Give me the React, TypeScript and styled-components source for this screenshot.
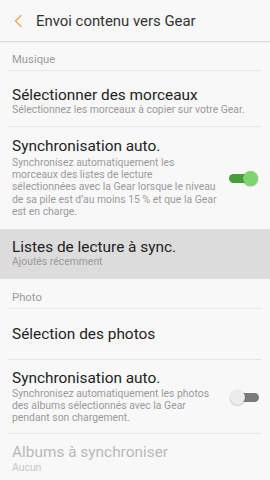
import React from "react";
import styled, { createGlobalStyle } from "styled-components";

const Global = createGlobalStyle`
  html, body { margin: 0; padding: 0; background: #f8f8f8; }
  body { font-family: Roboto, "Noto Sans", "Liberation Sans", sans-serif; -webkit-font-smoothing: antialiased; }
  * { box-sizing: border-box; }
`;

const Screen = styled.div`
  width: 270px;
  height: 480px;
  overflow: hidden;
  background: #f8f8f8;
  display: flex;
  flex-direction: column;
`;

const Header = styled.header`
  height: 42px;
  flex: none;
  display: flex;
  align-items: center;
  border-bottom: 1px solid #dcdcdc;
  box-shadow: 0 1px 1px rgba(0, 0, 0, 0.04);
`;

const BackButton = styled.div`
  width: 36px;
  height: 42px;
  display: flex;
  align-items: center;
  justify-content: flex-start;
  padding-left: 13px;
  padding-top: 1px;
`;

const Title = styled.h1`
  margin: 0;
  font-size: 14.9px;
  font-weight: 400;
  color: #333333;
`;

const SectionLabel = styled.div<{ $pt: number }>`
  flex: none;
  margin: 0 8px;
  padding: ${(p) => p.$pt}px 4px 4px;
  font-size: 11.3px;
  line-height: 12px;
  color: #9b9b9b;
  border-bottom: 1px solid #e7e7e7;
`;

const Row = styled.div<{ $pt: number; $pb: number; $pressed?: boolean; $divider?: boolean }>`
  flex: none;
  display: flex;
  align-items: center;
  padding: ${(p) => p.$pt}px 12px ${(p) => p.$pb}px;
  background: ${(p) => (p.$pressed ? "#dcdcdc" : "transparent")};
  position: relative;
  ${(p) =>
    p.$divider
      ? `&::after { content: ""; position: absolute; left: 8px; right: 8px; bottom: 0; height: 1px; background: #e7e7e7; }`
      : ""}
`;

const TextCol = styled.div<{ $narrow?: boolean }>`
  flex: 1;
  min-width: 0;
  ${(p) => (p.$narrow ? "max-width: 205px;" : "")}
`;

const ItemTitle = styled.div<{ $disabled?: boolean }>`
  font-size: 15.4px;
  line-height: 17px;
  color: ${(p) => (p.$disabled ? "#b9b9b9" : "#222222")};
`;

const ItemSub = styled.div<{ $disabled?: boolean; $gap?: number }>`
  font-size: 10.4px;
  line-height: 12.2px;
  margin-top: ${(p) => p.$gap ?? 0}px;
  color: ${(p) => (p.$disabled ? "#c6c6c6" : "#9a9a9a")};
`;

const SwitchWrap = styled.div<{ $on: boolean }>`
  width: 29px;
  height: 16px;
  position: relative;
  flex: none;
  margin-left: auto;
  margin-right: ${(p) => (p.$on ? 0 : -1)}px;
`;

const Track = styled.div<{ $on: boolean }>`
  position: absolute;
  top: 3.5px;
  height: 9px;
  border-radius: 5px;
  left: ${(p) => (p.$on ? 0 : 7)}px;
  right: ${(p) => (p.$on ? 7 : 0)}px;
  background: ${(p) => (p.$on ? "#4a9d3c" : "#7a7a7a")};
`;

const Knob = styled.div<{ $on: boolean }>`
  position: absolute;
  top: 0.5px;
  width: 15px;
  height: 15px;
  border-radius: 50%;
  left: ${(p) => (p.$on ? 14 : 0)}px;
  background: ${(p) => (p.$on ? "#7fd46c" : "#ececec")};
  box-shadow: 0 0.5px 1.5px rgba(0, 0, 0, 0.3);
`;

const Switch = ({ on }: { on: boolean }) => (
  <SwitchWrap $on={on}>
    <Track $on={on} />
    <Knob $on={on} />
  </SwitchWrap>
);

export default function App() {
  return (
    <Screen>
      <Global />
      <Header>
        <BackButton>
          <svg width="10" height="14" viewBox="0 0 10 14">
            <path d="M8 1.5 L2.5 7 L8 12.5" fill="none" stroke="#f0a154" strokeWidth="1.3" strokeLinecap="round" strokeLinejoin="round" />
          </svg>
        </BackButton>
        <Title>Envoi contenu vers Gear</Title>
      </Header>

      <SectionLabel $pt={12}>Musique</SectionLabel>

      <Row $pt={16} $pb={11} $divider>
        <TextCol>
          <ItemTitle>Sélectionner des morceaux</ItemTitle>
          <ItemSub>Sélectionnez les morceaux à copier sur votre Gear.</ItemSub>
        </TextCol>
      </Row>

      <Row $pt={11.2} $pb={10.8}>
        <TextCol $narrow>
          <ItemTitle>Synchronisation auto.</ItemTitle>
          <ItemSub $gap={1.6}>
            Synchronisez automatiquement les morceaux des listes de lecture sélectionnées avec la Gear lorsque le niveau de sa pile est d’au moins 15 % et que la Gear est en charge.
          </ItemSub>
        </TextCol>
        <Switch on />
      </Row>

      <Row $pt={10.2} $pb={10.4} $pressed>
        <TextCol>
          <ItemTitle>Listes de lecture à sync.</ItemTitle>
          <ItemSub>Ajoutés récemment</ItemSub>
        </TextCol>
      </Row>

      <SectionLabel $pt={13}>Photo</SectionLabel>

      <Row $pt={17} $pb={17} $divider>
        <TextCol>
          <ItemTitle>Sélection des photos</ItemTitle>
        </TextCol>
      </Row>

      <Row $pt={10} $pb={9.6} $divider>
        <TextCol $narrow>
          <ItemTitle>Synchronisation auto.</ItemTitle>
          <ItemSub $gap={1.5}>
            Synchronisez automatiquement les photos des albums sélectionnés avec la Gear pendant son chargement.
          </ItemSub>
        </TextCol>
        <Switch on={false} />
      </Row>

      <Row $pt={10} $pb={10}>
        <TextCol>
          <ItemTitle $disabled>Albums à synchroniser</ItemTitle>
          <ItemSub $disabled $gap={1.2}>Aucun</ItemSub>
        </TextCol>
      </Row>
    </Screen>
  );
}
